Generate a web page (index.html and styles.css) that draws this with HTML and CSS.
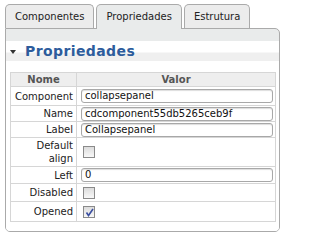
FILE: index.html
```html
<!DOCTYPE html>
<html>
<head>
<meta charset="utf-8">
<link rel="stylesheet" href="styles.css">
</head>
<body>
<div class="wrap">
  <div class="tabs">
    <div class="tab">Componentes</div>
    <div class="tab active">Propriedades</div>
    <div class="tab">Estrutura</div>
  </div>
  <div class="panel">
    <div class="content">
      <div class="header"><span class="tri"></span>Propriedades</div>
      <div class="body">
        <table class="props">
          <thead>
            <tr><th class="c-name">Nome</th><th>Valor</th></tr>
          </thead>
          <tbody>
            <tr class="r-first"><td class="c-name">Component</td><td><div class="inp">collapsepanel</div></td></tr>
            <tr class="r-inp"><td class="c-name">Name</td><td><div class="inp">cdcomponent55db5265ceb9f</div></td></tr>
            <tr class="r-inp"><td class="c-name">Label</td><td><div class="inp">Collapsepanel</div></td></tr>
            <tr class="r-tall"><td class="c-name">Default<br>align</td><td><span class="cb"></span></td></tr>
            <tr class="r-left"><td class="c-name">Left</td><td><div class="inp">0</div></td></tr>
            <tr class="r-cb"><td class="c-name">Disabled</td><td><span class="cb"></span></td></tr>
            <tr class="r-last"><td class="c-name">Opened</td><td><span class="cb checked"><svg width="9" height="9" viewBox="0 0 9 9"><path d="M1.5 4.5 L3.5 7.5 L8 1" fill="none" stroke="#3b4fa0" stroke-width="1.6"/></svg></span></td></tr>
          </tbody>
        </table>
      </div>
    </div>
  </div>
</div>
</body>
</html>
```
FILE: styles.css
```css
html, body {
  margin: 0;
  padding: 0;
  background: #ffffff;
}
body {
  font-family: "DejaVu Sans", Verdana, sans-serif;
  font-size: 10px;
  color: #222;
}
.wrap {
  padding: 4px 5px 0 5px;
}
.tabs {
  display: flex;
  gap: 2px;
  position: relative;
  z-index: 2;
}
.tab {
  box-sizing: border-box;
  height: 24px;
  line-height: 24px;
  padding: 0 9px;
  background: #ececec;
  border: 1px solid #aaaaaa;
  border-bottom: none;
  border-radius: 5px 5px 0 0;
  color: #222;
}
.tab.active {
  height: 25px;
  margin-bottom: -1px;
  background: #e9ebeb;
}
.panel {
  box-sizing: border-box;
  width: 275px;
  height: 204px;
  border: 1px solid #aaaaaa;
  border-radius: 0 5px 5px 5px;
  background: #e9ebeb;
  padding-top: 12px;
  position: relative;
  z-index: 1;
}
.content {
  background: #ffffff;
  height: 190px;
  border-radius: 0 0 4px 4px;
}
.header {
  height: 20px;
  line-height: 20px;
  background: linear-gradient(#ffffff 0, #ffffff 11px, #efefef 12px, #efefef 100%);
  font-size: 14px;
  letter-spacing: 0.4px;
  font-weight: bold;
  color: #2d5c9c;
  display: flex;
  align-items: center;
}
.tri {
  display: inline-block;
  width: 0;
  height: 0;
  border-left: 3.5px solid transparent;
  border-right: 3.5px solid transparent;
  border-top: 4px solid #333;
  margin: 1px 9px 0 4px;
}
.body {
  padding: 11px 4px 0 4px;
}
.props {
  width: 266px;
  border-collapse: collapse;
  border: 1px solid #cfcfcf;
}
.props th, .props td {
  border: 1px solid #d6d6d6;
  padding: 0;
}
.props th {
  background: #eeeeee;
  color: #555;
  font-weight: bold;
  height: 13px;
  line-height: 13px;
  text-align: center;
}
.props td.c-name {
  width: 62px;
  text-align: right;
  padding-right: 3px;
  color: #222;
  line-height: 13px;
}
.props th.c-name {
  width: 62px;
}
.props tr.r-first td { height: 18px; }
.props tr.r-inp td { height: 15px; }
.props tr.r-tall td { height: 28px; }
.props tr.r-left td { height: 16px; }
.props tr.r-cb td { height: 17px; }
.props tr.r-last td { height: 19px; }
.inp {
  box-sizing: border-box;
  height: 14px;
  line-height: 12px;
  margin: 0 2px 0 4px;
  border: 1px solid #a8a8a8;
  border-radius: 3px;
  padding: 0 3px;
  color: #111;
  box-shadow: inset 0 1px 1px #ddd;
}
.cb {
  display: block;
  box-sizing: border-box;
  width: 12px;
  height: 12px;
  margin-left: 6px;
  border: 1px solid #8a8a8a;
  background: linear-gradient(#dcdcdc, #f8f8f8);
  position: relative;
}
.cb svg {
  position: absolute;
  left: 1px;
  top: 1px;
}
```
